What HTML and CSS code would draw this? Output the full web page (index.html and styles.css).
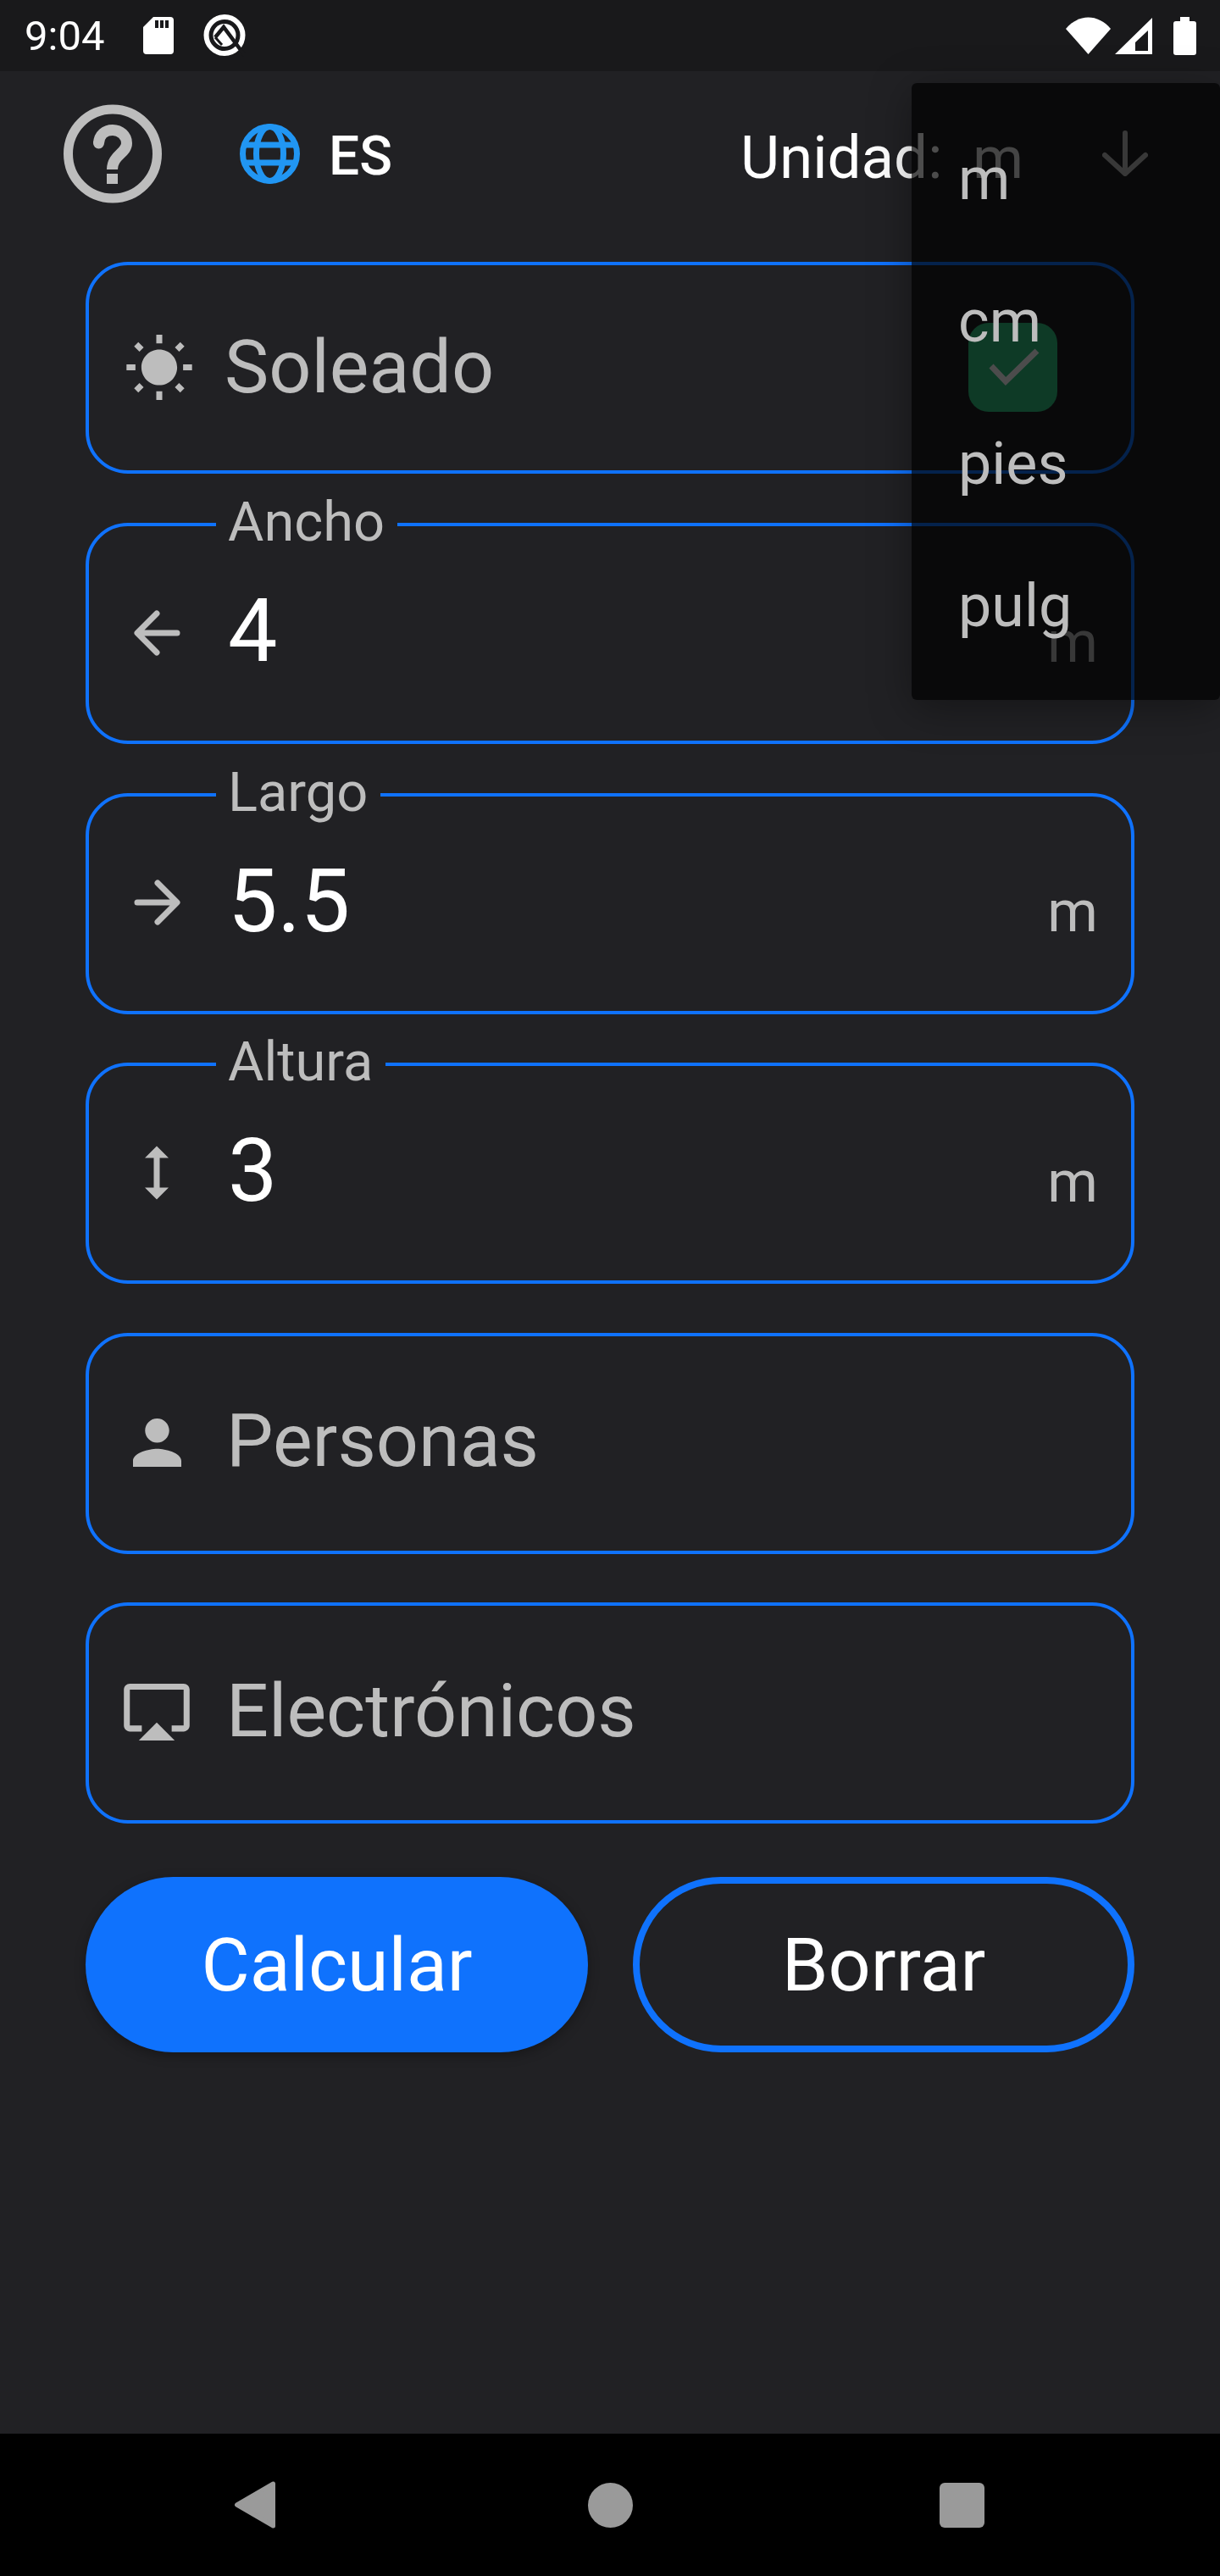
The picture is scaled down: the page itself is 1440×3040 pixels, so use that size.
FILE: index.html
```html
<!DOCTYPE html>
<html lang="es">
<head>
    <meta charset="UTF-8">
    <meta name="viewport" content="width=device-width, initial-scale=1.0">
    <title>Calculadora</title>
    <link rel="stylesheet" href="styles.css">
</head>

<body>
    <div class="app">
        <!-- Status bar -->
        <div class="status-bar">
            <span class="time">9:04</span>
            <svg class="sd-icon" viewBox="0 0 36 44"><path d="M12 0H32a4 4 0 0 1 4 4V40a4 4 0 0 1-4 4H4a4 4 0 0 1-4-4V12Z" fill="#fff"/><path d="M14 4h4v9h-4zM20 4h4v9h-4zM26 4h4v9h-4z" fill="#19191b"/></svg>
            <svg class="q-icon" viewBox="0 0 50 50">
                <circle cx="25" cy="24.5" r="21.5" fill="none" stroke="#fff" stroke-width="6"/>
                <circle cx="25" cy="24.5" r="13.5" fill="#fff"/>
                <path d="M14 27 24 15 50 50" fill="none" stroke="#19191b" stroke-width="4.5"/>
                <path d="M14 27 22 36" fill="none" stroke="#19191b" stroke-width="3"/>
            </svg>
            <div class="status-right">
                <svg class="wifi-icon" viewBox="0 0 53 44"><path d="M0 14C15-4 38-4 53 14L26.5 44Z" fill="#fff"/></svg>
                <svg class="signal-icon" viewBox="0 0 44 43"><path fill-rule="evenodd" d="M0 43 44 0V43ZM24 29 39 15V39H24Z" fill="#fff"/></svg>
                <svg class="battery-icon" viewBox="0 0 27 45"><path d="M8 0h11v5h5a3 3 0 0 1 3 3V42a3 3 0 0 1-3 3H3a3 3 0 0 1-3-3V8a3 3 0 0 1 3-3h5Z" fill="#fff"/></svg>
            </div>
        </div>

        <div class="main">
            <!-- Top row -->
            <div class="top-row">
                <svg class="help-icon" viewBox="0 0 116 117">
                    <circle cx="58" cy="58.5" r="52.5" fill="none" stroke="#bdbdbd" stroke-width="11"/>
                    <path d="M41.5 46C42 36 49 30.5 58 30.5 67 30.5 74.5 37 74.5 46 74.5 58 57.5 60 57.5 77" fill="none" stroke="#bdbdbd" stroke-width="13"/>
                    <circle cx="41.5" cy="46" r="6.5" fill="#bdbdbd"/>
                    <rect x="51" y="82" width="13" height="12" fill="#bdbdbd"/>
                </svg>
                <svg class="globe-icon" viewBox="0 0 71 71" fill="none" stroke="#2196f3" stroke-width="7">
                    <circle cx="35.5" cy="35.5" r="32"/>
                    <ellipse cx="35.5" cy="35.5" rx="16" ry="32"/>
                    <path d="M3 25H68M3 46H68"/>
                </svg>
                <span class="lang">ES</span>
                <div class="unit-select">
                    <span class="unit-label">Unidad:</span>
                    <span class="unit-value">m</span>
                </div>
                <svg class="down-icon" viewBox="0 0 54 54" fill="none" stroke="#bdbdbd" stroke-width="6" stroke-linecap="round" stroke-linejoin="round"><path d="M27 3V51M3 29 27 51 51 29"/></svg>
            </div>

            <!-- Form -->
            <div class="form">
                <div class="field field-weather">
                    <div class="field-icon">
                        <svg class="sun-icon" viewBox="1 .55 22 21.9"><path d="M6.76 4.84l-1.8-1.79-1.41 1.41 1.79 1.79 1.42-1.41zM4 10.5H1v2h3v-2zm9-9.95h-2V3.5h2V.55zm7.45 3.91l-1.41-1.41-1.79 1.79 1.41 1.41 1.79-1.79zm-3.21 13.7l1.79 1.8 1.41-1.41-1.8-1.79-1.4 1.4zM20 10.5v2h3v-2h-3zm-8-5c-3.31 0-6 2.69-6 6s2.69 6 6 6 6-2.69 6-6-2.69-6-6-6zm-1 16.95h2V19.5h-2v2.95zm-7.45-3.91l1.41 1.41 1.79-1.8-1.41-1.41-1.79 1.8z" fill="#bdbdbd"/></svg>
                    </div>
                    <span class="placeholder">Soleado</span>
                    <div class="checkbox">
                        <svg viewBox="0 0 60 46"><path d="M3 22 20 40 57 4" fill="none" stroke="#fff" stroke-width="7"/></svg>
                    </div>
                </div>

                <div class="field">
                    <span class="field-label">Ancho</span>
                    <div class="field-icon">
                        <svg class="arrow-icon" viewBox="0 0 55 54" fill="none" stroke="#bdbdbd" stroke-width="7" stroke-linecap="round" stroke-linejoin="round"><path d="M51 27H5M27 4 4 27 27 50"/></svg>
                    </div>
                    <span class="value">4</span>
                    <span class="suffix">m</span>
                </div>

                <div class="field">
                    <span class="field-label">Largo</span>
                    <div class="field-icon">
                        <svg class="arrow-icon" viewBox="0 0 55 54" fill="none" stroke="#bdbdbd" stroke-width="7" stroke-linecap="round" stroke-linejoin="round"><path d="M4 27H50M28 4 51 27 28 50"/></svg>
                    </div>
                    <span class="value">5.5</span>
                    <span class="suffix">m</span>
                </div>

                <div class="field">
                    <span class="field-label">Altura</span>
                    <div class="field-icon">
                        <svg class="height-icon" viewBox="8 3 8 18"><path d="M13 6.99h3L12 3 8 6.99h3v10.02H8L12 21l4-3.99h-3z" fill="#bdbdbd"/></svg>
                    </div>
                    <span class="value">3</span>
                    <span class="suffix">m</span>
                </div>

                <div class="field">
                    <div class="field-icon">
                        <svg class="person-icon" viewBox="4 4 16 16"><path d="M12 12c2.21 0 4-1.79 4-4s-1.79-4-4-4-4 1.79-4 4 1.79 4 4 4zm0 2c-2.67 0-8 1.34-8 4v2h16v-2c0-2.66-5.33-4-8-4z" fill="#bdbdbd"/></svg>
                    </div>
                    <span class="placeholder">Personas</span>
                </div>

                <div class="field">
                    <div class="field-icon">
                        <svg class="screen-icon" viewBox="1 3 22 19"><path d="M6 22h12l-6-6zM21 3H3c-1.1 0-2 .9-2 2v12c0 1.1.9 2 2 2h4v-2H3V5h18v12h-4v2h4c1.1 0 2-.9 2-2V5c0-1.1-.9-2-2-2z" fill="#bdbdbd"/></svg>
                    </div>
                    <span class="placeholder">Electrónicos</span>
                </div>

                <div class="buttons">
                    <button class="btn btn-primary">Calcular</button>
                    <button class="btn btn-outline">Borrar</button>
                </div>
            </div>

            <!-- Unit dropdown, open over the form -->
            <div class="unit-menu">
                <div class="unit-item">m</div>
                <div class="unit-item">cm</div>
                <div class="unit-item">pies</div>
                <div class="unit-item">pulg</div>
            </div>
        </div>

        <!-- Navigation bar -->
        <div class="nav-bar">
            <svg class="nav-back" viewBox="0 0 48 56"><polygon points="45.5,3 45.5,53 2.5,28" fill="#9a9a9a" stroke="#9a9a9a" stroke-width="5" stroke-linejoin="round"/></svg>
            <div class="nav-home"></div>
            <div class="nav-recent"></div>
        </div>
    </div>
</body>
</html>
```

FILE: styles.css
```css
body {
    margin: 0;
    padding: 0;
    background-color: #212124;
    font-family: Roboto, "Liberation Sans", sans-serif;
}

.app {
    width: 1440px;
    height: 3040px;
    display: flex;
    flex-direction: column;
    overflow: hidden;
}

/* Status bar */
.status-bar {
    height: 84px;
    flex-shrink: 0;
    background-color: #19191b;
    display: flex;
    align-items: center;
    padding: 0 28px 0 29px;
    color: #fff;
}

.time {
    font-size: 49px;
    width: 140px;
}

.sd-icon {
    width: 36px;
    height: 44px;
    margin-right: 35px;
}

.q-icon {
    width: 50px;
    height: 50px;
}

.status-right {
    margin-left: auto;
    display: flex;
    align-items: center;
}

.wifi-icon {
    width: 53px;
    height: 44px;
    margin-right: 5px;
}

.signal-icon {
    width: 44px;
    height: 43px;
    margin-right: 25px;
}

.battery-icon {
    width: 27px;
    height: 45px;
}

.main {
    position: relative;
    flex: 1;
    background-color: #212124;
}

/* Top row */
.top-row {
    height: 194px;
    display: flex;
    align-items: center;
    padding: 0 85px 0 75px;
}

.help-icon {
    width: 116px;
    height: 117px;
    margin-right: 92px;
}

.globe-icon {
    width: 71px;
    height: 71px;
    margin-right: 34px;
}

.lang {
    font-size: 64px;
    font-weight: 500;
    color: #fff;
    margin-top: 6px;
}

.unit-select {
    margin-left: auto;
    margin-top: 8px;
    margin-right: 93px;
    display: flex;
    align-items: baseline;
    gap: 36px;
}

.unit-label {
    font-size: 71px;
    color: #fff;
}

.unit-value {
    font-size: 68px;
    color: #e6e6e6;
}

.down-icon {
    width: 54px;
    height: 54px;
}

/* Form */
.form {
    display: flex;
    flex-direction: column;
    gap: 57.5px;
    padding: 31px 101px 0;
}

.field {
    position: relative;
    box-sizing: border-box;
    height: 261px;
    border: 4px solid #0f72fd;
    border-radius: 50px;
    display: flex;
    align-items: center;
    padding-bottom: 2px;
}

.field-weather {
    height: 250px;
    margin-bottom: 0.5px;
}

.field-icon {
    width: 160px;
    flex-shrink: 0;
    display: flex;
    justify-content: center;
}

.sun-icon {
    width: 78px;
    height: 77px;
    margin-left: 6px;
}

.arrow-icon {
    width: 55px;
    height: 54px;
}

.height-icon {
    width: 28px;
    height: 64px;
}

.person-icon {
    width: 57px;
    height: 57px;
}

.screen-icon {
    width: 78px;
    height: 67px;
}

.placeholder {
    font-size: 88px;
    color: #bdbdbd;
    margin-left: 2px;
    margin-bottom: 5px;
}

.field-weather .placeholder {
    margin-left: 0;
    margin-bottom: 2px;
}

.value {
    font-size: 104px;
    color: #fff;
    margin-left: 4px;
    margin-bottom: 4px;
}

.suffix {
    margin-left: auto;
    margin-top: 22px;
    padding-right: 39px;
    font-size: 68px;
    color: #bdbdbd;
}

/* Label sits in a notch of the border */
.field-label {
    position: absolute;
    top: -40px;
    left: 150px;
    padding: 0 15px 0 14px;
    background-color: #212124;
    font-size: 65px;
    line-height: 70px;
    color: #bdbdbd;
}

.checkbox {
    width: 105px;
    height: 105px;
    margin-left: auto;
    margin-right: 87px;
    border-radius: 24px;
    background-color: #2fc17f;
    display: flex;
    align-items: center;
    justify-content: center;
}

.checkbox svg {
    width: 60px;
    height: 46px;
    margin: 0 0 0 2px;
}

/* Buttons */
.buttons {
    display: flex;
    gap: 53px;
    margin-top: 5px;
}

.btn {
    box-sizing: border-box;
    height: 207px;
    padding: 0;
    border-radius: 104px;
    font-family: inherit;
    font-size: 88px;
    color: #fff;
}

.btn-primary {
    width: 593px;
    border: none;
    background-color: #0f72fd;
    box-shadow: 0 4px 14px rgba(0, 0, 0, 0.3);
}

.btn-outline {
    width: 592px;
    border: 8px solid #0f72fd;
    background-color: transparent;
}

/* Dropdown */
.unit-menu {
    position: absolute;
    top: 14px;
    left: 1076px;
    right: 0;
    padding: 29px 0 27px 55px;
    border-radius: 6px;
    background-color: rgba(0, 0, 0, 0.7);
    box-shadow: 0 10px 50px rgba(0, 0, 0, 0.35);
}

.unit-item {
    height: 168px;
    line-height: 168px;
    font-size: 70px;
    color: #bdbdbd;
}

/* Navigation bar */
.nav-bar {
    height: 168px;
    flex-shrink: 0;
    background-color: #000;
    display: flex;
    align-items: center;
    padding-left: 277px;
}

.nav-back {
    width: 48px;
    height: 56px;
}

.nav-home {
    width: 53px;
    height: 53px;
    margin-left: 369px;
    border-radius: 50%;
    background-color: #9a9a9a;
}

.nav-recent {
    width: 53px;
    height: 53px;
    margin-left: 362px;
    border-radius: 6px;
    background-color: #9a9a9a;
}
```
